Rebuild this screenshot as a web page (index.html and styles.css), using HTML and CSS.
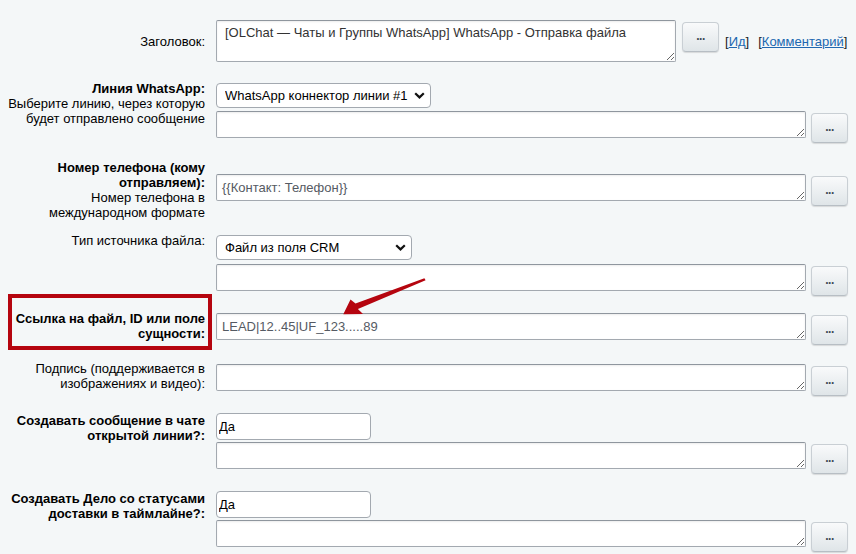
FILE: index.html
```html
<!DOCTYPE html>
<html lang="ru">
<head>
<meta charset="utf-8">
<title>Отправка файла</title>
<link rel="stylesheet" href="styles.css">
</head>
<body>
<div class="form">
  <div class="row row-1">
    <div class="label">Заголовок:</div>
    <div class="field field-title">
      <textarea class="ta ta-title">[OLChat — Чаты и Группы WhatsApp] WhatsApp - Отправка файла</textarea>
      <button class="dots dots-title" type="button">...</button>
      <span class="link-wrap">[<a href="#">Ид</a>]</span>
      <span class="link-wrap link-wrap-2">[<a href="#">Комментарий</a>]</span>
    </div>
  </div>

  <div class="row row-2">
    <div class="label"><b>Линия WhatsApp:</b><br>Выберите линию, через которую<br>будет отправлено сообщение</div>
    <div class="field field-m2">
      <span class="sel sel-line">
        <select class="select"><option>WhatsApp коннектор линии #1</option></select>
        <svg class="chev" width="11" height="7" viewBox="0 0 11 7"><path d="M1.2 1.2 5.5 5.4 9.8 1.2" fill="none" stroke="#111" stroke-width="2.2"/></svg>
      </span>
      <div class="tarow"><textarea class="ta"></textarea><button class="dots" type="button">...</button></div>
    </div>
  </div>

  <div class="row row-3">
    <div class="label"><b>Номер телефона (кому<br>отправляем):</b><br>Номер телефона в<br>международном формате</div>
    <div class="field field-m14">
      <div class="tarow"><textarea class="ta ta-val">{{Контакт: Телефон}}</textarea><button class="dots" type="button">...</button></div>
    </div>
  </div>

  <div class="row row-4">
    <div class="label">Тип источника файла:</div>
    <div class="field field-m2">
      <span class="sel sel-type">
        <select class="select"><option>Файл из поля CRM</option></select>
        <svg class="chev" width="11" height="7" viewBox="0 0 11 7"><path d="M1.2 1.2 5.5 5.4 9.8 1.2" fill="none" stroke="#111" stroke-width="2.2"/></svg>
      </span>
      <div class="tarow"><textarea class="ta"></textarea><button class="dots" type="button">...</button></div>
    </div>
  </div>

  <div class="row row-5">
    <div class="label"><b>Ссылка на файл, ID или поле<br>сущности:</b></div>
    <div class="field field-m2">
      <div class="tarow"><textarea class="ta ta-val">LEAD|12..45|UF_123.....89</textarea><button class="dots" type="button">...</button></div>
    </div>
    <div class="highlight"></div>
  </div>

  <div class="row row-6">
    <div class="label">Подпись (поддерживается в<br>изображениях и видео):</div>
    <div class="field field-m3">
      <div class="tarow"><textarea class="ta"></textarea><button class="dots" type="button">...</button></div>
    </div>
  </div>

  <div class="row row-7">
    <div class="label"><b>Создавать сообщение в чате<br>открытой линии?:</b></div>
    <div class="field">
      <input class="inp" type="text" value="Да">
      <div class="tarow"><textarea class="ta"></textarea><button class="dots" type="button">...</button></div>
    </div>
  </div>

  <div class="row row-8">
    <div class="label"><b>Создавать Дело со статусами<br>доставки в таймлайне?:</b></div>
    <div class="field">
      <input class="inp" type="text" value="Да">
      <div class="tarow"><textarea class="ta"></textarea><button class="dots" type="button">...</button></div>
    </div>
  </div>

  <svg class="arrow" width="856" height="554" viewBox="0 0 856 554">
    <polygon points="343.3,314.3 363,314 357.9,309.1 425.6,280.3 424.4,278.3 355.5,303.5 350.5,299.5" fill="#b5050f"/>
  </svg>
</div>
</body>
</html>
```

FILE: styles.css
```css
* { box-sizing: border-box; }

html, body {
  margin: 0;
  background: #f4f7f8;
}

body {
  width: 856px;
  height: 554px;
  overflow: hidden;
  font-family: "Liberation Sans", Arial, sans-serif;
  font-size: 13px;
  color: #000;
}

.form {
  position: relative;
  padding-top: 20px;
}

.row {
  position: relative;
  display: flex;
  align-items: flex-start;
  column-gap: 11px;
}

.row-1 { align-items: center; }
.row-2 { margin-top: 19px; }
.row-3 { margin-top: 17px; }
.row-4 { margin-top: 13px; }
.row-5 { margin-top: 15px; }
.row-6 { margin-top: 16px; }
.row-7 { margin-top: 17px; }
.row-8 { margin-top: 17px; }

.label {
  width: 205px;
  flex: none;
  text-align: right;
  line-height: 15px;
  white-space: nowrap;
  color: #000;
}

.label b { font-weight: bold; }

.field {
  display: flex;
  flex-direction: column;
  align-items: flex-start;
}

.field-m2 { margin-top: 2px; }
.field-m3 { margin-top: 3px; }
.field-m14 { margin-top: 14px; }

.field-title {
  flex-direction: row;
  align-items: flex-start;
}

.tarow {
  display: flex;
  align-items: flex-start;
}

.ta {
  display: block;
  width: 590px;
  height: 27px;
  margin: 0;
  padding: 5px 5px;
  font-family: "Liberation Sans", Arial, sans-serif;
  font-size: 13px;
  line-height: 15px;
  color: #333;
  background: #fff;
  border: 1px solid #a3a9b0;
  border-top-color: #8f969e;
  border-radius: 2px;
  box-shadow: inset 0 1px 2px rgba(0, 0, 0, 0.08);
  resize: both;
  overflow: hidden;
}

.ta-val { color: #555a63; }

.ta-title {
  width: 460px;
  height: 42px;
  padding: 4px 8px;
  color: #333;
}

.dots {
  flex: none;
  width: 37px;
  height: 30px;
  margin: 2px 0 0 5px;
  padding: 0 0 2px;
  font-family: "Liberation Sans", Arial, sans-serif;
  font-size: 12px;
  font-weight: bold;
  letter-spacing: -0.5px;
  color: #3f4955;
  background: linear-gradient(#f9fafb, #dfe5e8);
  border: 1px solid #c9cfd4;
  border-bottom-color: #b7bec4;
  border-radius: 4px;
  box-shadow: 0 1px 1px rgba(0, 0, 0, 0.12);
}

.dots-title {
  margin-left: 6px;
}

.link-wrap {
  margin: 14px 0 0 6px;
  line-height: 15px;
  color: #222;
}

.link-wrap-2 { margin-left: 9px; }

.link-wrap a {
  color: #2067b0;
  text-decoration: underline;
}

.sel {
  position: relative;
  display: block;
  margin-bottom: 3px;
}

.sel-type { margin-bottom: 4px; }

.select {
  appearance: none;
  -webkit-appearance: none;
  display: block;
  height: 25px;
  margin: 0;
  padding: 0 0 0 8px;
  font-family: "Liberation Sans", Arial, sans-serif;
  font-size: 13px;
  color: #000;
  background: #fff;
  border: 1px solid #a3a9b0;
  border-radius: 4px;
}

.sel-line .select { width: 215px; }
.sel-type .select { width: 196px; }

.chev {
  position: absolute;
  right: 6px;
  top: 9px;
  pointer-events: none;
}

.inp {
  display: block;
  width: 155px;
  height: 27px;
  margin: 0 0 2px;
  padding: 0 2px;
  font-family: "Liberation Sans", Arial, sans-serif;
  font-size: 13px;
  color: #000;
  background: #fff;
  border: 1px solid #a3a9b0;
  border-radius: 4px;
}

.highlight {
  position: absolute;
  left: 8px;
  top: -17px;
  width: 204px;
  height: 56px;
  border: 4px solid #b5050f;
  pointer-events: none;
}

.arrow {
  position: absolute;
  left: 0;
  top: 0;
  pointer-events: none;
}
```
